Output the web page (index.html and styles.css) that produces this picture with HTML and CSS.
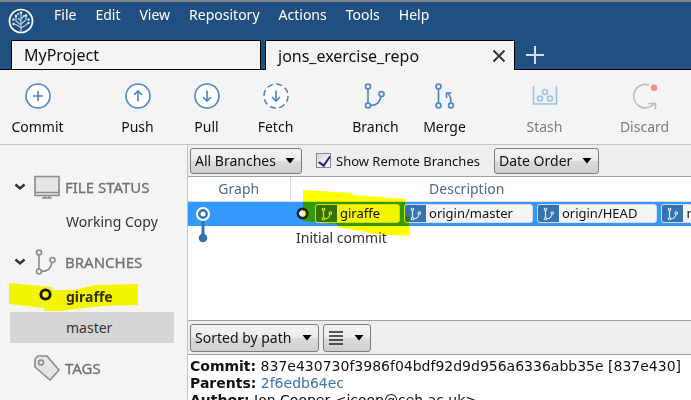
FILE: index.html
```html
<!DOCTYPE html>
<html lang="en">
<head>
<meta charset="utf-8">
<title>jons_exercise_repo</title>
<link rel="stylesheet" href="styles.css">
</head>
<body>
<svg width="0" height="0" class="defs" aria-hidden="true">
  <symbol id="branch" viewBox="0 0 22 26">
    <path d="M5 6v14M18 13.500C17 19 13 22.500 7.500 22.500" />
    <circle cx="5" cy="3.500" r="2.500"/><circle cx="5" cy="22.500" r="2.500"/><circle cx="18.500" cy="11" r="2.500"/>
  </symbol>
  <symbol id="caret" viewBox="0 0 10 6"><path d="M0.500 0h9L5 5.500z"/></symbol>
  <symbol id="chevron" viewBox="0 0 12 8"><path d="M1.500 1.500 6 5.500l4.500-4" fill="none" stroke="#333" stroke-width="2.400"/></symbol>
</svg>

<header class="titlebar">
  <div class="menubar">
    <svg class="logo" viewBox="0 0 26 26" width="26" height="26" aria-hidden="true">
      <circle cx="13" cy="13" r="11.500" fill="none" stroke="#fff" stroke-width="1.700"/>
      <path d="M13 24V5M13 20l-4-3-3-1M13 17l-5-4V9M13 13l-3-3M13 20l5-3 2-2M13 16l5-4V8M13 11l3-3" fill="none" stroke="#b9cfe2" stroke-width="1.200"/>
      <g fill="#dce8f2"><circle cx="13" cy="4.800" r="1.300"/><circle cx="8" cy="8" r="1.300"/><circle cx="10" cy="6" r="1"/><circle cx="5.500" cy="11.500" r="1.200"/><circle cx="5.500" cy="16" r="1.200"/><circle cx="18" cy="7.500" r="1.300"/><circle cx="20.500" cy="11.500" r="1.200"/><circle cx="20.500" cy="15" r="1.200"/><circle cx="16" cy="8" r="1"/></g>
    </svg>
    <nav class="menus">
      <a href="#">File</a><a href="#">Edit</a><a href="#">View</a><a href="#">Repository</a><a href="#">Actions</a><a href="#">Tools</a><a href="#">Help</a>
    </nav>
  </div>
  <div class="tabs">
    <a class="tab" href="#">MyProject</a>
    <div class="tab tab-active">
      <a href="#">jons_exercise_repo</a>
      <button class="close" aria-label="Close tab"><svg viewBox="0 0 14 14" width="14" height="14"><path d="M1.500 1.500l11 11M12.500 1.500l-11 11" stroke="#333" stroke-width="1.800"/></svg></button>
    </div>
    <button class="add" aria-label="New tab"><svg viewBox="0 0 18 18" width="18" height="18"><path d="M0 9h18M9 0v18" stroke="#d3dee8" stroke-width="2"/></svg></button>
  </div>
</header>

<div class="toolbar">
  <button class="tool"><svg viewBox="0 0 26 26"><circle class="disc" cx="13" cy="13" r="12"/><path d="M13 8v10M8 13h10"/></svg>Commit</button>
  <div class="tool-group">
    <button class="tool"><svg viewBox="0 0 26 26"><circle class="disc" cx="13" cy="13" r="12"/><path d="M13 18.500V8.500M9 12l4-4 4 4"/></svg>Push</button>
    <button class="tool"><svg viewBox="0 0 26 26"><circle class="disc" cx="13" cy="13" r="12"/><path d="M13 7.500v10M9 14l4 4 4-4"/></svg>Pull</button>
    <button class="tool"><svg viewBox="0 0 26 26"><circle class="disc dashed" cx="13" cy="13" r="12"/><path d="M13 7.500v10M9 14l4 4 4-4"/></svg>Fetch</button>
  </div>
  <div class="tool-group">
    <button class="tool"><svg viewBox="0 0 26 26"><use href="#branch" width="22" height="26"/></svg>Branch</button>
    <button class="tool"><svg viewBox="0 0 26 26"><path d="M6.500 6v14M18.500 20c1-4 0-7-2.500-9.500M14.500 15v-5h5"/><circle cx="6.500" cy="3.500" r="2.500"/><circle cx="6.500" cy="22.500" r="2.500"/><circle cx="19" cy="22.500" r="2.500"/></svg>Merge</button>
  </div>
  <button class="tool" disabled><svg class="stash" viewBox="0 0 26 26"><path class="box" d="M1.500 3v18h23V3"/><circle cx="13" cy="9" r="2.500"/><circle cx="8" cy="15.500" r="2.500"/><circle cx="18" cy="15.500" r="2.500"/></svg>Stash</button>
  <button class="tool" disabled><svg class="discard" viewBox="0 0 26 26"><path d="M17 2A11.700 11.700 0 1 0 22 21M16.500 20.500h7v6"/><circle class="dot" cx="22" cy="4.700" r="3.200"/></svg>Discard</button>
</div>

<main class="workspace">
  <aside class="sidebar">
    <section>
      <h2><svg class="chev" width="12" height="8"><use href="#chevron"/></svg><svg class="side-icon" viewBox="0 0 26 26"><path d="M1 2.500h24v19H1zM1 18.500h24M11 21.500v2M15 21.500v2M8 24h10"/></svg>FILE STATUS</h2>
      <a class="item" href="#">Working Copy</a>
    </section>
    <section>
      <h2><svg class="chev" width="12" height="8"><use href="#chevron"/></svg><svg class="side-icon open" viewBox="0 0 26 26"><use href="#branch" width="22" height="26"/></svg>BRANCHES</h2>
      <a class="item current" href="#">giraffe
        <svg class="ring" viewBox="0 0 12 12"><circle cx="6" cy="6" r="4.300"/></svg>
        <svg class="marker" viewBox="0 0 130 30"><path d="M0 1 32 4 43 5v3H65L86 3 129 2V23L95 24 66 27 50 29H36L35 26 0 22z"/></svg>
      </a>
      <a class="item selected" href="#">master</a>
    </section>
    <section>
      <h2><span class="chev"></span><svg class="side-icon" viewBox="0 0 26 26"><path d="M1 4 4 1h9l12 14-9 10L1 12z"/><circle cx="7" cy="7.500" r="2.500"/></svg>TAGS</h2>
    </section>
  </aside>

  <div class="content">
    <div class="bar filters">
      <span class="dropdown wide"><select aria-label="Branches"><option>All Branches</option></select><svg class="arrow"><use href="#caret"/></svg></span>
      <label class="check"><input type="checkbox" checked>Show Remote Branches</label>
      <span class="dropdown"><select aria-label="Order"><option>Date Order</option></select><svg class="arrow"><use href="#caret"/></svg></span>
    </div>

    <div class="log">
      <table>
        <thead><tr><th class="graph">Graph</th><th class="desc">Description</th></tr></thead>
        <tbody>
          <tr class="active">
            <td class="graph"><svg viewBox="0 0 30 24" width="30" height="24"><path d="M15 17v7" stroke="#3572b0" stroke-width="3"/><circle cx="15" cy="12" r="7" fill="#fff"/><circle cx="15" cy="12" r="3.700" fill="#fff" stroke="#3572b0" stroke-width="2.400"/></svg></td>
            <td>
              <div class="refs">
                <svg class="head" viewBox="0 0 12 12"><circle cx="6" cy="6" r="4.300"/></svg>
                <span class="ref"><span class="badge"><svg viewBox="0 0 22 26"><use href="#branch"/></svg></span>giraffe</span>
                <span class="ref"><span class="badge"><svg viewBox="0 0 22 26"><use href="#branch"/></svg></span>origin/master</span>
                <span class="ref"><span class="badge"><svg viewBox="0 0 22 26"><use href="#branch"/></svg></span>origin/HEAD</span>
                <span class="ref"><span class="badge"><svg viewBox="0 0 22 26"><use href="#branch"/></svg></span>master</span>
                <svg class="marker" viewBox="0 0 106 47"><path d="M0 0 49 3 50 5 102 9V26L106 27V46L72 44 35 37 34 34 0 31z"/></svg>
              </div>
            </td>
          </tr>
          <tr>
            <td class="graph"><svg viewBox="0 0 30 24" width="30" height="24"><path d="M15 0v9" stroke="#3572b0" stroke-width="3"/><circle cx="15" cy="12" r="4.300" fill="#3572b0"/></svg></td>
            <td class="message">Initial commit</td>
          </tr>
        </tbody>
      </table>
    </div>

    <div class="bar sorting">
      <span class="dropdown sort"><select aria-label="Sort"><option>Sorted by path</option></select><svg class="arrow"><use href="#caret"/></svg></span>
      <button class="dropdown view" aria-label="View mode"><svg width="14" height="14" viewBox="0 0 14 14"><path d="M0 1h14M0 5h14M0 9h14M0 13h14" stroke="#222" stroke-width="1.400"/></svg><svg class="arrow"><use href="#caret"/></svg></button>
    </div>

    <div class="details">
      <p><b>Commit:</b> 837e430730f3986f04bdf92d9d956a6336abb35e [837e430]</p>
      <p><b>Parents:</b> <a href="#">2f6edb64ec</a></p>
      <p><b>Author:</b> Jon Cooper &lt;jcoop@ceh.ac.uk&gt;</p>
    </div>
  </div>
</main>
</body>
</html>
```
FILE: styles.css
```css
* { box-sizing: border-box; }
body {
  margin: 0;
  height: 100vh;
  display: flex;
  flex-direction: column;
  overflow: hidden;
  background: #f4f4f4;
  color: #111;
  font: 14px/20px "Noto Sans", "Open Sans", sans-serif;
}
a { color: inherit; text-decoration: none; }
button, select, input { font: inherit; color: inherit; margin: 0; }
button { border: 0; padding: 0; background: none; }
.defs { position: absolute; }

.titlebar {
  background: #205081;
  border-top: 2px solid #7b868c;
  flex: none;
}
.menubar { display: flex; height: 38px; padding: 0 8px; gap: 20px; }
.logo { margin-top: 6px; }
.menus { display: flex; gap: 19px; padding-top: 3px; color: #fff; }
.tabs { display: flex; gap: 4px; padding-left: 11px; height: 30px; border-bottom: 1px solid #000; }
.tab {
  width: 250px;
  padding: 0 12px;
  display: flex;
  align-items: center;
  justify-content: space-between;
  background: #f4f4f4;
  border: 1px solid #000;
  border-bottom: 0;
  font-size: 16px;
}
.tab-active { margin-bottom: -1px; padding-right: 8px; }
.close, .add { display: flex; align-items: center; }
.add { margin-left: 7px; }

.toolbar {
  display: flex;
  gap: 31px;
  flex: none;
  height: 75px;
  padding: 13px 3px 0;
  border-bottom: 1px solid #c3c3c3;
}
.tool-group { display: flex; }
.tool {
  width: 69px;
  display: flex;
  flex-direction: column;
  align-items: center;
  gap: 8px;
}
.tool svg { width: 26px; height: 26px; overflow: visible; fill: none; stroke: #4a86c5; stroke-width: 1.6; }
.tool .disc { fill: #fff; }
.tool .dashed { stroke-dasharray: 6 3.4; }
.tool:disabled { color: #7d7d7d; }
.tool .stash { stroke: #a0c1e2; }
.tool .box { fill: #edf3f9; }
.tool .discard { stroke: #bdbdbd; }
.tool .dot { fill: #e8938a; stroke: none; }

.workspace { display: flex; flex: 1; min-height: 0; }
.sidebar { width: 188px; flex: none; padding: 27px 13px 0 10px; border-right: 1px solid #c3c3c3; color: #333; overflow: hidden; }
.sidebar section { margin-bottom: 10px; }
.sidebar h2 {
  display: flex;
  align-items: center;
  height: 31px;
  margin: 0 0 3px;
  padding: 0 0 2px 4px;
  font-size: 15px;
  font-weight: 400;
  color: #707070;
  -webkit-text-stroke: 0.3px #707070;
}
.chev { width: 12px; height: 8px; margin-right: 8px; }
.side-icon { width: 26px; height: 26px; margin-right: 5px; fill: #e6e6e6; stroke: #8a8a8a; stroke-width: 1.6; }
.side-icon path { fill: #e6e6e6; }
.open { fill: none; }
.item { display: block; position: relative; height: 31px; line-height: 31px; padding-left: 56px; }
.current { font-weight: 700; }
.selected { background: #d5d5d5; }
.ring { position: absolute; left: 29px; top: 7px; width: 13px; height: 13px; fill: none; stroke: #111; stroke-width: 2.6; }
.marker { position: absolute; fill: #ff0; mix-blend-mode: multiply; pointer-events: none; }
.item .marker { left: -1px; top: 1px; width: 130px; height: 30px; }

.content { display: flex; flex-direction: column; flex: 1; min-width: 0; background: #fff; }
.bar { display: flex; align-items: center; flex: none; background: #eee; padding-left: 2px; }
.filters { height: 32px; border-bottom: 1px solid #a0a0a0; }
.sorting { height: 35px; gap: 4px; border-top: 1px solid #a0a0a0; border-bottom: 1px solid #a0a0a0; }
.dropdown {
  position: relative;
  display: flex;
  align-items: center;
  height: 26px;
  width: 105px;
  border: 1px solid #7c7c7c;
  border-radius: 3px;
  background: linear-gradient(#f3f3f3, #ebebeb 50%, #dcdcdc 50%, #cfcfcf);
}
.dropdown.wide { width: 112px; }
.sorting .dropdown { height: 28px; }
.dropdown.sort { width: 129px; }
.dropdown.view { width: 48px; padding-left: 5px; }
.dropdown select { appearance: none; width: 100%; height: 100%; border: 0; padding: 0 0 0 4px; background: none; }
.arrow { position: absolute; right: 6px; width: 10px; height: 6px; pointer-events: none; }
.check { display: flex; align-items: center; gap: 5px; margin: 0 14px; font-size: 13px; }
.check input {
  appearance: none;
  width: 15px;
  height: 15px;
  border: 1px solid #888;
  background: linear-gradient(135deg, #d5dade, #fff);
  position: relative;
}
.check input:checked::after {
  content: "";
  position: absolute;
  left: 4px;
  top: 0;
  width: 5px;
  height: 10px;
  border: solid #24247e;
  border-width: 0 2px 2px 0;
  transform: rotate(35deg);
}

.log { flex: 1; min-height: 0; overflow: hidden; }
table { width: 100%; table-layout: fixed; border-collapse: collapse; }
th, td { padding: 0; height: 24px; text-align: left; vertical-align: middle; }
th { color: #526a87; font-weight: 400; border-bottom: 1px solid #ddd; }
th.graph { width: 102px; text-align: center; border-right: 1px solid #ddd; }
th.desc { text-align: center; padding-right: 48px; }
td svg { display: block; }
.active { background: #39f; }
.refs { display: flex; align-items: center; gap: 4px; position: relative; margin-left: 6px; white-space: nowrap; }
.head { flex: none; width: 13px; height: 13px; margin-right: 2px; fill: #fff; stroke: #222; stroke-width: 2.4; }
.ref {
  display: flex;
  align-items: center;
  flex: none;
  gap: 3px;
  height: 19px;
  padding-right: 19px;
  border: 1px solid #d3dce4;
  border-radius: 3px;
  background: #f5f5f5;
  font-size: 13px;
  line-height: 17px;
}
.badge { display: flex; align-items: center; justify-content: center; width: 21px; height: 17px; background: #3572b0; border-radius: 2px 0 0 2px; }
.badge svg { width: 11px; height: 14px; fill: none; stroke: #dbe8f4; stroke-width: 2.4; }
.refs .marker { left: 7px; top: -14px; width: 106px; height: 47px; }
.message { padding-left: 6px; color: #333; }

.details {
  flex: none;
  height: 45px;
  padding: 3px 2px 0;
  overflow: hidden;
  font: 14px/17px "DejaVu Sans", sans-serif;
  white-space: nowrap;
}
.details p { margin: 0; }
.details a { color: #3b73af; }
```
